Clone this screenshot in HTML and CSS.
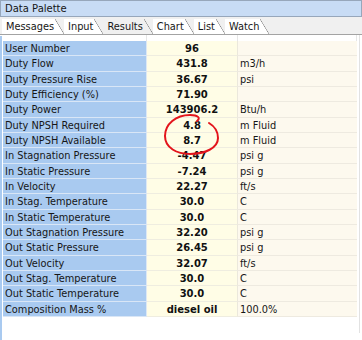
FILE: index.html
```
<!DOCTYPE html>
<html lang="en">
<head>
    <meta charset="UTF-8">
    <title>Data Palette</title>
    <link rel="stylesheet" href="styles.css">
</head>
<body>
    <div class="palette">
        <div class="titlebar">Data Palette</div>

        <div class="tabs">
            <span class="tab">Messages</span>
            <span class="tab">Input</span>
            <span class="tab active">Results</span>
            <span class="tab">Chart</span>
            <span class="tab">List</span>
            <span class="tab">Watch</span>
        </div>

        <div class="content">
            <div class="strip"></div>
            <div class="results">
                <div class="head"></div><div class="head"></div><div class="head"></div>

                <div class="label">User Number</div><div class="value">96</div><div class="unit"></div>
                <div class="label">Duty Flow</div><div class="value">431.8</div><div class="unit">m3/h</div>
                <div class="label">Duty Pressure Rise</div><div class="value">36.67</div><div class="unit">psi</div>
                <div class="label">Duty Efficiency (%)</div><div class="value">71.90</div><div class="unit"></div>
                <div class="label">Duty Power</div><div class="value">143906.2</div><div class="unit">Btu/h</div>
                <div class="label">Duty NPSH Required</div><div class="value">4.8</div><div class="unit">m Fluid</div>
                <div class="label">Duty NPSH Available</div><div class="value">8.7</div><div class="unit">m Fluid</div>
                <div class="label">In Stagnation Pressure</div><div class="value">-4.47</div><div class="unit">psi g</div>
                <div class="label">In Static Pressure</div><div class="value">-7.24</div><div class="unit">psi g</div>
                <div class="label">In Velocity</div><div class="value">22.27</div><div class="unit">ft/s</div>
                <div class="label">In Stag. Temperature</div><div class="value">30.0</div><div class="unit">C</div>
                <div class="label">In Static Temperature</div><div class="value">30.0</div><div class="unit">C</div>
                <div class="label">Out Stagnation Pressure</div><div class="value">32.20</div><div class="unit">psi g</div>
                <div class="label">Out Static Pressure</div><div class="value">26.45</div><div class="unit">psi g</div>
                <div class="label">Out Velocity</div><div class="value">32.07</div><div class="unit">ft/s</div>
                <div class="label">Out Stag. Temperature</div><div class="value">30.0</div><div class="unit">C</div>
                <div class="label">Out Static Temperature</div><div class="value">30.0</div><div class="unit">C</div>
                <div class="label">Composition Mass %</div><div class="value">diesel oil</div><div class="unit">100.0%</div>
            </div>
            <div class="edge"></div>
        </div>

        <!-- hand drawn mark around the NPSH values -->
        <svg class="mark" width="362" height="340" viewBox="0 0 362 340">
            <path d="M197 121 C201 118 198 115 190 115 C176 115 165 124 165 136 C165 148 177 154 190 154 C205 154 218 148 218 138 C218 131 214 126 209 123"
                  fill="none" stroke="#e3141c" stroke-width="2" stroke-linecap="round"/>
        </svg>
    </div>
</body>
</html>
```

FILE: styles.css
```
body {
    margin: 0;
    background-color: #ffffff;
    font-family: "DejaVu Sans", Verdana, sans-serif;
    font-size: 9.8px;
    color: #161616;
}

.palette {
    position: relative;
    width: 362px;
    height: 340px;
    overflow: hidden;
}

.titlebar {
    box-sizing: border-box;
    height: 17px;
    line-height: 15px;
    padding-left: 4px;
    background-color: #c8dcf5;
    border: 1px solid #97a7bb;
    font-size: 10px;
}

.tabs {
    box-sizing: border-box;
    height: 18px;
    display: flex;
    align-items: flex-end;
    padding-left: 2px;
    background-color: #f0f0f0;
    border-bottom: 1px solid #a3a3a3;
}

.tab {
    position: relative;
    height: 15px;
    line-height: 16px;
    padding: 0 10px 0 4px;
    background: linear-gradient(to right, #ffffff calc(100% - 9px), transparent calc(100% - 9px));
}

.tab::after {
    content: "";
    position: absolute;
    top: 0;
    right: 0;
    width: 9px;
    height: 100%;
    background: linear-gradient(to top right, #ffffff calc(50% - 0.6px), #8f8f8f 50%, transparent calc(50% + 0.6px));
}

.tab.active {
    background: linear-gradient(to right, #f0f0f0 calc(100% - 9px), transparent calc(100% - 9px));
}

.tab.active::after {
    background: linear-gradient(to top right, #f0f0f0 calc(50% - 0.6px), #8f8f8f 50%, transparent calc(50% + 0.6px));
}

.content {
    display: flex;
    height: 305px;
}

.strip {
    width: 2px;
    margin-top: 1px;
    margin-right: 1px;
    background-color: #a9caf0;
}

.results {
    display: grid;
    grid-template-columns: 144px 91px 119px;
    grid-template-rows: 6px;
    grid-auto-rows: 15.33px;
    align-content: start;
}

.results > div {
    box-sizing: border-box;
    white-space: nowrap;
    overflow: hidden;
    line-height: 15px;
}

.head {
    border-right: 1px solid #e6e6e6;
}

.label {
    padding-left: 2px;
    background-color: #a9caf0;
    border-bottom: 1px solid #d9e6f6;
    border-right: 1px solid #dde8f4;
}

.value {
    text-align: center;
    font-weight: bold;
    font-size: 10px;
    color: #111111;
    background-color: #fffde6;
    border-bottom: 1px solid #efede0;
    border-right: 1px solid #ebe8dc;
}

.unit {
    padding-left: 2px;
    background-color: #fdf9ee;
    border-bottom: 1px solid #eeeae0;
}

.edge {
    width: 1px;
    height: 298px;
    margin-left: 2px;
    background-color: #e2e2e2;
}

.mark {
    position: absolute;
    top: 0;
    left: 0;
    pointer-events: none;
}
```
